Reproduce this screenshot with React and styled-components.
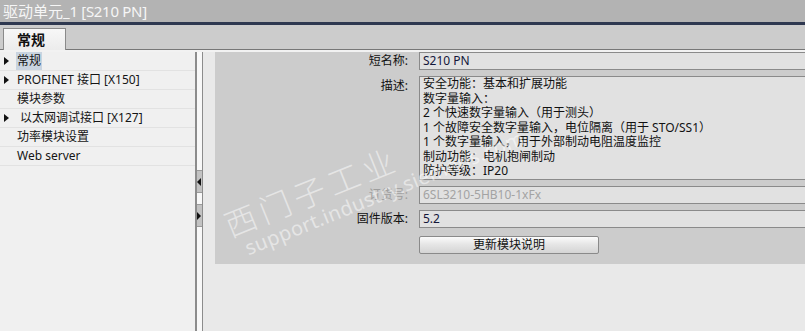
import React from 'react'
import styled, { createGlobalStyle } from 'styled-components'

const GlobalStyle = createGlobalStyle`
    html, body {
        margin: 0;
        padding: 0;
        background: #eaeaea;
    }
    * {
        box-sizing: border-box;
    }
`

const font = `"Noto Sans", "Noto Sans CJK SC", sans-serif`

const treeItems = [
    { label: '常规', arrow: true, selected: true },
    { label: 'PROFINET 接口 [X150]', arrow: true },
    { label: '模块参数' },
    { label: '以太网调试接口 [X127]', arrow: true, indent: true },
    { label: '功率模块设置' },
    { label: 'Web server' },
]

const descLines = [
    '安全功能：基本和扩展功能',
    '数字量输入：',
    '2 个快速数字量输入（用于测头）',
    '1 个故障安全数字量输入，电位隔离（用于 STO/SS1）',
    '1 个数字量输入，用于外部制动电阻温度监控',
    '制动功能：电机抱闸制动',
    '防护等级：IP20',
]

function App() {
    return (
        <>
            <GlobalStyle />
            <Window>
                <TitleBar>
                    驱动单元<TitleLatin>_1 [S210 PN]</TitleLatin>
                </TitleBar>
                <TabStrip>
                    <Tab>常规</Tab>
                </TabStrip>
                <Body>
                    <Tree>
                        {treeItems.map((item) => (
                            <TreeRow key={item.label}>
                                <Arrow $show={item.arrow} />
                                <TreeLabel
                                    $selected={item.selected}
                                    $indent={item.indent}
                                >
                                    {item.label}
                                </TreeLabel>
                            </TreeRow>
                        ))}
                    </Tree>
                    <Splitter>
                        <SplitButton $top={118}>
                            <Tri $dir="left" />
                        </SplitButton>
                        <SplitButton $top={11}>
                            <Tri $dir="right" />
                        </SplitButton>
                    </Splitter>
                    <Content>
                        <Panel>
                            <FormGrid>
                                <Label>短名称:</Label>
                                <Field>S210 PN</Field>

                                <Label $top>描述:</Label>
                                <TextBox>
                                    {descLines.map((line) => (
                                        <div key={line}>{line}</div>
                                    ))}
                                </TextBox>

                                <Label $disabled>订货号:</Label>
                                <Field $disabled>6SL3210-5HB10-1xFx</Field>

                                <Label>固件版本:</Label>
                                <Field>5.2</Field>

                                <span />
                                <Button>更新模块说明</Button>
                            </FormGrid>
                        </Panel>
                        <Watermark>
                            <WmBig>西门子工业</WmBig>
                            <WmSmall>support.industry.siemens.com</WmSmall>
                        </Watermark>
                    </Content>
                </Body>
            </Window>
        </>
    )
}

const Window = styled.div`
    width: 805px;
    height: 331px;
    display: flex;
    flex-direction: column;
    overflow: hidden;
    font-family: ${font};
    background: #eaeaea;
`

const TitleBar = styled.div`
    height: 25px;
    background: #b3b3b3;
    border-bottom: 3px solid #2e3850;
    color: #f6f6f6;
    font-size: 15px;
    line-height: 22px;
    padding-left: 3px;
    white-space: nowrap;
`

const TitleLatin = styled.span`
    letter-spacing: -0.3px;
`

const TabStrip = styled.div`
    height: 25px;
    background: #cccccc;
    border-bottom: 1px solid #777;
    display: flex;
    align-items: flex-end;
    padding-left: 3px;
`

const Tab = styled.div`
    width: 63px;
    height: 22px;
    margin-bottom: -1px;
    background: linear-gradient(#f7f7f7, #ececec);
    border: 1px solid #8a8a8a;
    border-bottom: none;
    font-size: 14px;
    font-weight: bold;
    line-height: 21px;
    padding-left: 13px;
    color: #111;
`

const Body = styled.div`
    flex: 1;
    display: flex;
    border-top: 2px solid #f2f2f2;
`

const Tree = styled.div`
    width: 195px;
    background: #f0f0f0;
`

const TreeRow = styled.div`
    height: 19px;
    display: flex;
    align-items: center;
    border-bottom: 1px solid #e2e2e2;
    font-size: 12px;
    color: #151515;
`

const Arrow = styled.span`
    width: 16px;
    display: flex;
    justify-content: center;
    padding-right: 4px;
    &::before {
        content: '';
        display: ${(p) => (p.$show ? 'block' : 'none')};
        border-left: 5px solid #111;
        border-top: 4px solid transparent;
        border-bottom: 4px solid transparent;
    }
`

const TreeLabel = styled.span`
    padding: 0 1px;
    margin-left: ${(p) => (p.$indent ? '3px' : '0')};
    line-height: 18px;
    background: ${(p) => (p.$selected ? '#c9d4e0' : 'transparent')};
    white-space: nowrap;
`

const Splitter = styled.div`
    width: 8px;
    background: #f8f8f8;
    border-left: 2px solid #8c8c8c;
    border-right: 1px solid #8c8c8c;
    display: flex;
    flex-direction: column;
`

const SplitButton = styled.div`
    margin-top: ${(p) => p.$top}px;
    height: 23px;
    background: #c2c2c2;
    border-top: 1px solid #9a9a9a;
    border-bottom: 1px solid #9a9a9a;
    display: flex;
    align-items: center;
    justify-content: flex-start;
`

const Tri = styled.span`
    width: 0;
    height: 0;
    border-top: 4px solid transparent;
    border-bottom: 4px solid transparent;
    ${(p) =>
        p.$dir === 'left'
            ? 'border-right: 4px solid #111;'
            : 'border-left: 4px solid #111;'}
`

const Content = styled.div`
    flex: 1;
    position: relative;
    background: #e9e9e9;
    padding-left: 12px;
    overflow: hidden;
`

const Panel = styled.div`
    height: 212px;
    background: #cccccc;
`

const FormGrid = styled.div`
    display: grid;
    grid-template-columns: 193px 1fr;
    column-gap: 11px;
    row-gap: 6px;
    align-items: center;
    font-size: 12px;
`

const Label = styled.div`
    text-align: right;
    align-self: ${(p) => (p.$top ? 'start' : 'center')};
    padding-top: ${(p) => (p.$top ? '1px' : '0')};
    color: ${(p) => (p.$disabled ? '#9e9e9e' : '#111')};
    line-height: 18px;
    white-space: nowrap;
`

const Field = styled.div`
    height: 18px;
    width: calc(100% + 6px);
    background: #e1e1e1;
    border: 1px solid #8a8a8a;
    padding-left: 3px;
    line-height: 16px;
    color: ${(p) => (p.$disabled ? '#a3a3a3' : '#14173a')};
    white-space: nowrap;
`

const TextBox = styled.div`
    height: 104px;
    width: calc(100% + 6px);
    background: #e1e1e1;
    border: 1px solid #8a8a8a;
    padding: 0 3px;
    font-size: 12px;
    line-height: 14.5px;
    color: #111;
    white-space: nowrap;
`

const Button = styled.button`
    margin-top: 2px;
    width: 180px;
    height: 18px;
    padding: 0;
    border: 1px solid #8a8a8a;
    border-radius: 2px;
    background: linear-gradient(#fbfbfb, #e6e6e6 45%, #d4d4d4);
    font-family: ${font};
    font-size: 12px;
    line-height: 16px;
    color: #111;
`

const Watermark = styled.div`
    position: absolute;
    left: 17px;
    top: 160px;
    transform: rotate(-22deg);
    transform-origin: left top;
    pointer-events: none;
    color: rgba(255, 255, 255, 0.5);
    display: flex;
    flex-direction: column;
    line-height: 1;
    white-space: nowrap;
`

const WmBig = styled.span`
    font-size: 32px;
    font-weight: 300;
    letter-spacing: 5px;
`

const WmSmall = styled.span`
    margin-top: 2px;
    font-size: 20px;
    letter-spacing: 0.5px;
    padding-left: 10px;
`

export default App
